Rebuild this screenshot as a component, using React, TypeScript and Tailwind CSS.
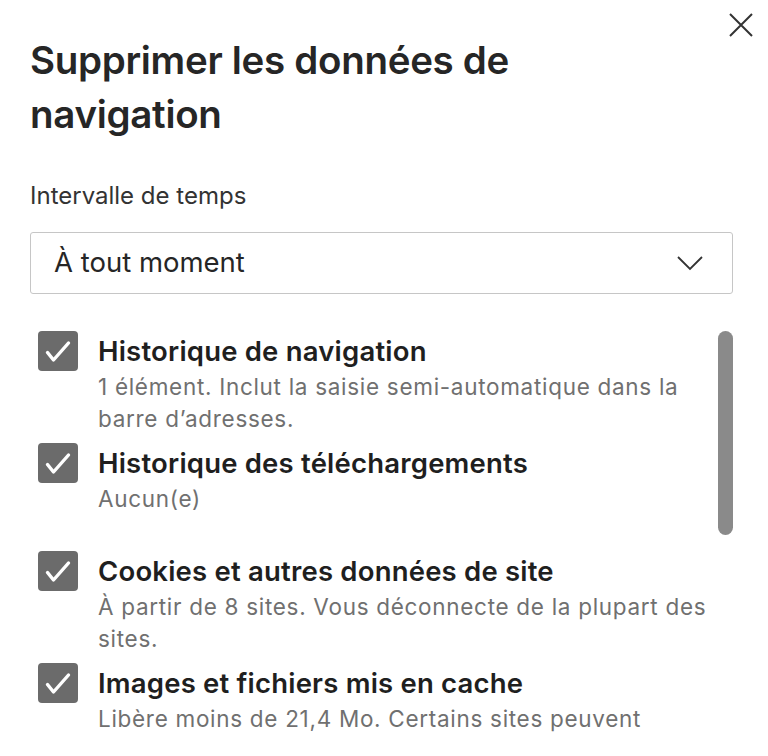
import React from "react";

const items = [
  {
    title: "Historique de navigation",
    desc: "1 élément. Inclut la saisie semi-automatique dans la barre d’adresses.",
  },
  { title: "Historique des téléchargements", desc: "Aucun(e)", extra: true },
  {
    title: "Cookies et autres données de site",
    desc: "À partir de 8 sites. Vous déconnecte de la plupart des sites.",
  },
  {
    title: "Images et fichiers mis en cache",
    desc: "Libère moins de 21,4 Mo. Certains sites peuvent se\u00A0charger plus lentement lors de votre prochaine visite.",
  },
];

function Check() {
  return (
    <div className="h-10 w-10 shrink-0 rounded-[4px] bg-[#6b6b6b]">
      <svg width="40" height="40" viewBox="0 0 40 40" fill="none">
        <path d="M9.5 21.5l6 7.5L30.5 12" stroke="#fff" strokeWidth="3.4" strokeLinecap="round" strokeLinejoin="round" />
      </svg>
    </div>
  );
}

export default function App() {
  return (
    <div className="relative h-[756px] w-[768px] overflow-hidden bg-white font-['Inter',sans-serif] text-[#262626]">
      <button className="absolute right-[14px] top-[12px] p-0" aria-label="Fermer">
        <svg width="26" height="26" viewBox="0 0 26 26" fill="none">
          <path d="M2 2l22 22M24 2L2 24" stroke="#333" strokeWidth="2" />
        </svg>
      </button>

      <div className="px-[30px] pt-[33px]">
        <h1 className="w-[560px] text-[38.5px] font-semibold leading-[54px] tracking-[-0.3px] text-[#262626]">
          Supprimer les données de navigation
        </h1>

        <div className="mt-[40px] text-[24px] leading-[30px] text-[#333]">Intervalle de temps</div>

        <div className="mt-[21px] flex h-[62px] w-[703px] items-center justify-between rounded-[3px] border border-[#c6c6c6] pl-[23px] pr-[28px]">
          <span className="text-[27.5px] text-[#262626]">À tout moment</span>
          <svg width="28" height="16" viewBox="0 0 28 16" fill="none">
            <path d="M2 2l12 12L26 2" stroke="#333" strokeWidth="1.8" />
          </svg>
        </div>

        <div className="mt-[37px] flex h-[405px] overflow-hidden">
          <div className="flex w-[680px] flex-col pl-[8px]">
            {items.map((it) => (
              <div key={it.title} className={`flex gap-[20px] ${it.extra ? "mb-[36px]" : "mb-[8px]"}`}>
                <Check />
                <div className="flex w-[620px] shrink-0 flex-col">
                  <div className="text-[27.5px] font-semibold leading-[40px] tracking-[0.2px] text-[#1f1f1f]">{it.title}</div>
                  <div className="text-[22.5px] leading-[32px] tracking-[0.7px] text-[#707070]">{it.desc}</div>
                </div>
              </div>
            ))}
          </div>
          <div className="ml-auto mr-[5px] h-[204px] w-[15px] shrink-0 rounded-full bg-[#8a8a8a]" />
        </div>
      </div>
    </div>
  );
}
